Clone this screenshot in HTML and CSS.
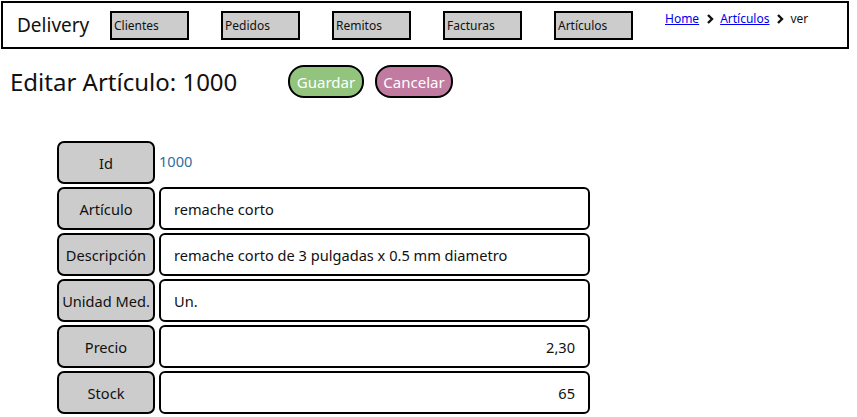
FILE: index.html
```html
<!DOCTYPE html>
<html lang="es">
<head>
    <meta charset="UTF-8">
    <title>Editar Artículo</title>
    <link rel="stylesheet" href="styles.css">
</head>
<body>
<div class="header">
    <div class="brand">Delivery</div>
    <ul class="nav">
        <li>Clientes</li>
        <li>Pedidos</li>
        <li>Remitos</li>
        <li>Facturas</li>
        <li>Artículos</li>
    </ul>
    <div class="crumbs">
        <a href="#">Home</a>
        <svg class="chev" width="8" height="10" viewBox="0 0 8 10"><path d="M2 1 L6 5 L2 9" fill="none" stroke="#111" stroke-width="2.4"/></svg>
        <a href="#">Artículos</a>
        <svg class="chev" width="8" height="10" viewBox="0 0 8 10"><path d="M2 1 L6 5 L2 9" fill="none" stroke="#111" stroke-width="2.4"/></svg>
        <span>ver</span>
    </div>
</div>

<div class="title-row">
    <h1 class="title">Editar Artículo: 1000</h1>
    <button class="btn btn-save">Guardar</button>
    <button class="btn btn-cancel">Cancelar</button>
</div>

<div class="form">
    <div class="label">Id</div>
    <div class="value-id">1000</div>

    <div class="label">Artículo</div>
    <div class="field">remache corto</div>

    <div class="label">Descripción</div>
    <div class="field">remache corto de 3 pulgadas x 0.5 mm diametro</div>

    <div class="label">Unidad Med.</div>
    <div class="field">Un.</div>

    <div class="label">Precio</div>
    <div class="field num">2,30</div>

    <div class="label">Stock</div>
    <div class="field num">65</div>
</div>
</body>
</html>
```

FILE: styles.css
```css
body, div, ul, li, h1, button {
    margin: 0;
    padding: 0;
}

body {
    font-family: "Noto Sans", "Open Sans", sans-serif;
    color: #111;
    background: #fff;
}

.header {
    box-sizing: border-box;
    margin: 1px 0 0 1px;
    width: 848px;
    height: 48px;
    border: 2px solid #000;
    display: flex;
    align-items: center;
    padding-left: 14px;
}

.brand {
    width: 93px;
    font-size: 19px;
    margin-top: -1px;
}

.nav {
    list-style: none;
    display: flex;
    gap: 32px;
    margin-top: 1px;
}

.nav li {
    box-sizing: border-box;
    width: 79px;
    height: 29px;
    background: #ccc;
    border: 2px solid #000;
    font-size: 12px;
    line-height: 25px;
    padding-left: 2px;
}

.crumbs {
    align-self: flex-start;
    margin: 7px 0 0 32px;
    font-size: 12px;
    display: flex;
    align-items: center;
}

.crumbs a {
    color: #0000ee;
}

.chev {
    margin: 1px 6px 0 7px;
}

.title-row {
    display: flex;
    align-items: center;
    margin-top: 16px;
    padding-left: 10px;
}

.title {
    width: 278px;
    font-size: 24px;
    font-weight: normal;
}

.btn {
    box-sizing: border-box;
    height: 33px;
    border: 2px solid #000;
    border-radius: 16px;
    font-family: inherit;
    font-size: 15px;
    color: #fff;
}

.btn-save {
    width: 76px;
    background: #92c47d;
}

.btn-cancel {
    width: 78px;
    margin-left: 11px;
    background: #c27ba0;
}

.form {
    display: grid;
    grid-template-columns: 98px 431px;
    grid-auto-rows: 43px;
    column-gap: 4px;
    row-gap: 3px;
    margin: 43px 0 0 57px;
}

.label {
    box-sizing: border-box;
    background: #ccc;
    border: 2px solid #000;
    border-radius: 7px;
    font-size: 14.6px;
    display: flex;
    align-items: center;
    justify-content: center;
    white-space: nowrap;
}

.value-id {
    font-size: 14.6px;
    color: #2f6e9e;
    display: flex;
    align-items: center;
    margin-top: -3px;
}

.field {
    box-sizing: border-box;
    border: 2px solid #000;
    border-radius: 6px;
    font-size: 14.6px;
    display: flex;
    align-items: center;
    padding: 0 13px;
}

.field.num {
    justify-content: flex-end;
}
```
